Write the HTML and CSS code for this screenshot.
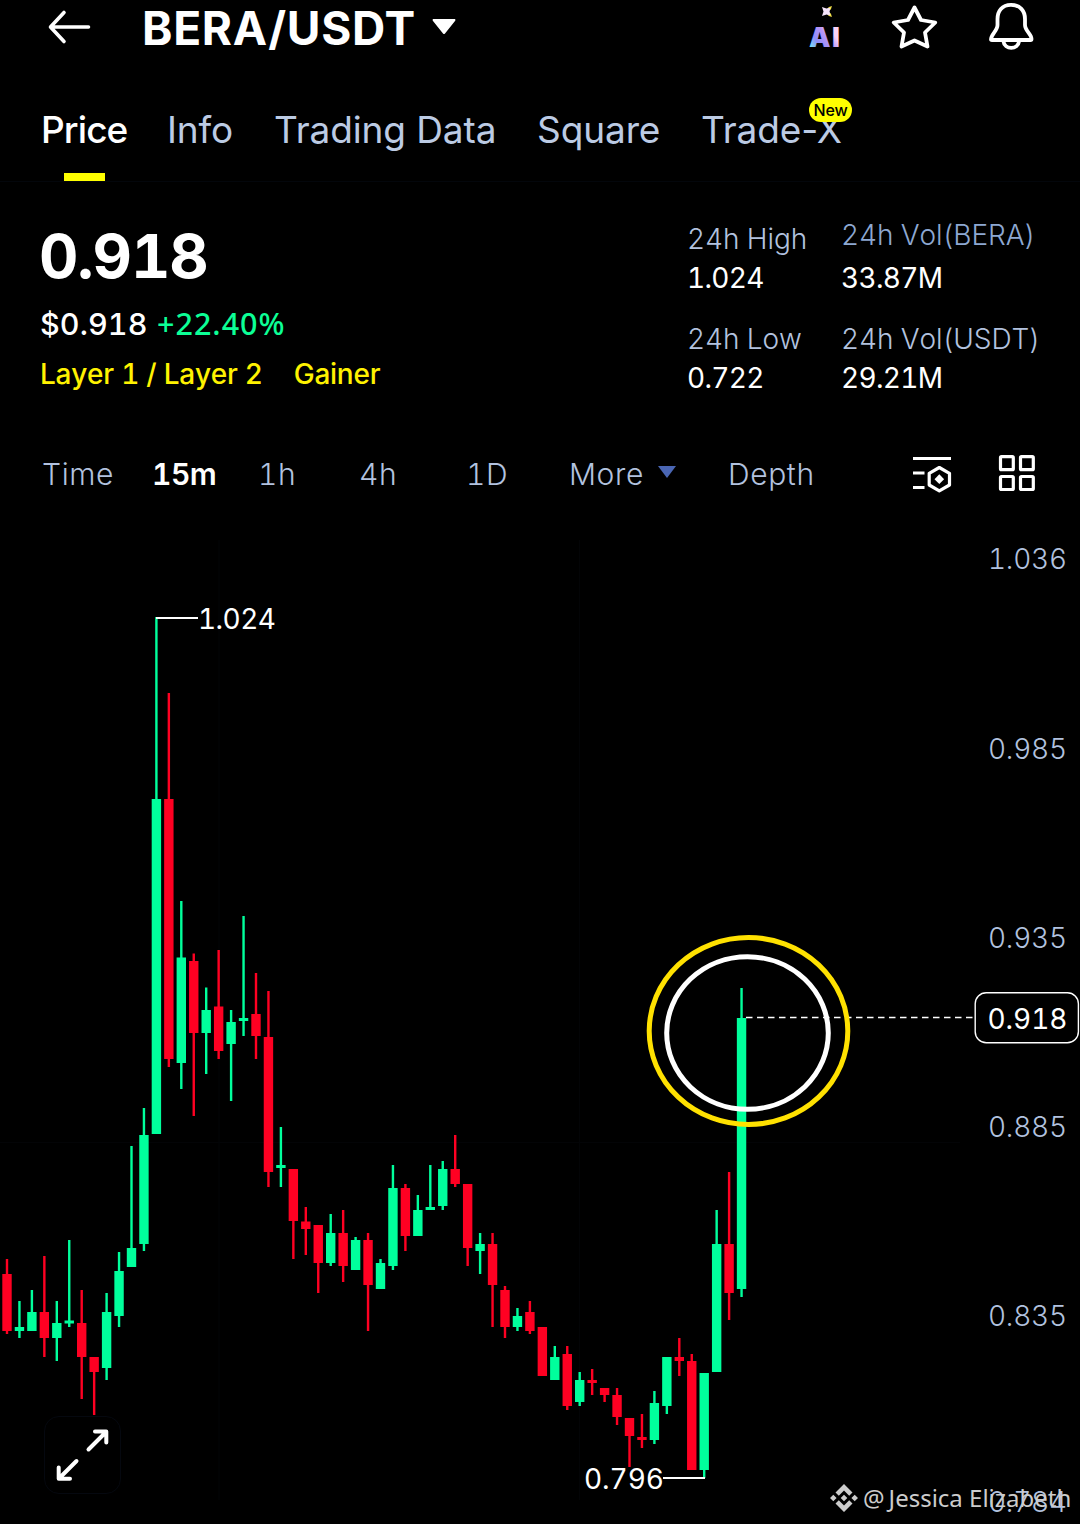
FILE: index.html
```
<!DOCTYPE html>
<html lang="en">
<head>
    <meta charset="UTF-8">
    <meta name="viewport" content="width=device-width, initial-scale=1.0">
    <title>BERA/USDT</title>
    <link rel="stylesheet" href="styles.css">
</head>
<body>
    <header class="header">
        <svg class="back" width="44" height="36" viewBox="0 0 44 36">
            <path d="M16 3.5 L2.5 18 L16 32.5 M3 18 H40.5"/>
        </svg>
        <h1 class="pair">BERA/USDT</h1>
        <svg class="caret" width="24" height="16" viewBox="0 0 24 16">
            <path d="M1 0 H23 Q24 1 23 2 L13 14.5 Q12 15.5 11 14.5 L1 2 Q0 1 1 0Z"/>
        </svg>
        <div class="actions">
            <svg width="40" height="52" viewBox="0 0 40 52">
                <defs>
                    <linearGradient id="aiFill" x1="0" y1="1" x2="1" y2="0.3">
                        <stop offset="0" stop-color="#7df0f4"/>
                        <stop offset="0.15" stop-color="#7fd8f6"/>
                        <stop offset="0.35" stop-color="#8f8dfa"/>
                        <stop offset="0.6" stop-color="#b795f8"/>
                        <stop offset="0.8" stop-color="#fbd3f7"/>
                    </linearGradient>
                </defs>
                <path class="spark" d="M14 7 L18.5 8.5 L23 7 L21.5 11.5 L23 16 L18.5 14.5 L14 16 L15.5 11.5Z"/>
                <path class="spark-edge" d="M20.5 7.8 L23 7 L22.2 9.5 M22.2 13.5 L23 16 L20.5 15.2"/>
                <text class="ai" x="1" y="47">AI</text>
            </svg>
            <svg class="line" width="48" height="52" viewBox="892 0 48 52">
                <path d="M915.5 7.5 L922 20 L936.3 22.5 L926 32.5 L928.5 46.5 L915.5 40.5 L902.5 46.5 L905 32.5 L894.7 22.5 L909 20Z"/>
            </svg>
            <svg class="line bell" width="48" height="52" viewBox="987 0 48 52">
                <path d="M1011 4.8 C1002 4.8 997.5 11 997.5 19 V25 C997.5 31 991 34 991 39.5 Q991 40 992 40 H1030.5 Q1031.5 40 1031.5 39 C1031.5 34 1025 31 1025 25 V19 C1025 11 1020 4.8 1011 4.8Z"/>
                <path d="M1003.5 41.5 C1004.5 50 1018 50 1019 41.5"/>
            </svg>
        </div>
    </header>

    <nav class="tabs">
        <span class="tab active">Price</span>
        <span class="tab">Info</span>
        <span class="tab">Trading Data</span>
        <span class="tab">Square</span>
        <span class="tab">Trade-X<em class="badge">New</em></span>
    </nav>

    <section class="ticker">
        <div class="quote">
            <div class="last">0.918</div>
            <div class="change"><span class="usd">$0.918</span><span class="pct">+22.40%</span></div>
            <div class="tags"><span>Layer 1 / Layer 2</span><span>Gainer</span></div>
        </div>
        <dl class="stats">
            <div><dt>24h High</dt><dd>1.024</dd></div>
            <div class="raised"><dt>24h Vol(BERA)</dt><dd>33.87M</dd></div>
            <div><dt>24h Low</dt><dd>0.722</dd></div>
            <div><dt>24h Vol(USDT)</dt><dd>29.21M</dd></div>
        </dl>
    </section>

    <nav class="intervals">
        <span>Time</span>
        <span class="on">15m</span>
        <span>1h</span>
        <span>4h</span>
        <span>1D</span>
        <span class="more">More<i class="more-caret"></i></span>
        <span>Depth</span>
        <svg class="tool" width="40" height="40" viewBox="912 454 40 40">
            <path d="M913 458.5 H951 M913 473 H924.5 M913 487.5 H924.5"/>
            <path d="M939.3 467.5 L949.5 473.3 V485 L939.3 490.8 L929.2 485 V473.3Z"/>
            <path class="solid" d="M939.3 474.3 L944.1 479.2 L939.3 484.1 L934.5 479.2Z"/>
        </svg>
        <svg class="tool" width="40" height="40" viewBox="998 454 40 40">
            <rect x="1000.5" y="456.7" width="12.8" height="13" rx="1"/>
            <rect x="1020.5" y="456.7" width="12.8" height="13" rx="1"/>
            <rect x="1000.5" y="476.5" width="12.8" height="13" rx="1"/>
            <rect x="1020.5" y="476.5" width="12.8" height="13" rx="1"/>
        </svg>
    </nav>

    <main class="chart">
        <svg id="plot" width="1080" height="1004" viewBox="0 520 1080 1004">
            <path class="grid" d="M0 1142.5 H960 M219 540 V1500 M579.5 540 V1500"/>
            <g id="candles"></g>
            <path class="leader" d="M156 618 H198 M663 1478 H705"/>
            <text class="mark" x="198" y="629" textLength="78">1.024</text>
            <text class="mark" x="584" y="1489" textLength="80">0.796</text>
            <path class="last-line" d="M746 1017.5 H974"/>
            <ellipse class="ring outer" cx="748.5" cy="1031" rx="99.3" ry="93.5"/>
            <ellipse class="ring inner" cx="747.5" cy="1033" rx="80.8" ry="76.3"/>
            <g id="axis"></g>
            <rect class="last-box" x="975.2" y="992.7" width="103.2" height="50" rx="11"/>
            <text class="mark" x="987.5" y="1029" textLength="80">0.918</text>
        </svg>
        <button class="expand">
            <svg width="56" height="56" viewBox="55 1427 56 56">
                <path d="M88.5 1449.5 L106 1432 M95 1431.5 H106.3 V1442.5 M76.5 1461 L59 1478.5 M70 1478.8 H58.7 V1467.5"/>
            </svg>
        </button>
        <div class="watermark">
            <svg width="28" height="28" viewBox="0 0 28 28">
                <path d="M14 0 L22.5 8.5 L19.2 11.8 L14 6.6 L8.8 11.8 L5.5 8.5Z"/>
                <path d="M14 28 L22.5 19.5 L19.2 16.2 L14 21.4 L8.8 16.2 L5.5 19.5Z"/>
                <path d="M3.3 10.7 L6.6 14 L3.3 17.3 L0 14Z M24.7 10.7 L28 14 L24.7 17.3 L21.4 14Z M14 10.7 L17.3 14 L14 17.3 L10.7 14Z"/>
            </svg>
            <span>@</span><span>Jessica Elizabeth</span>
        </div>
    </main>

    <script src="chart.js"></script>
</body>
</html>
```
FILE: styles.css
```
body {
    margin: 0;
    width: 1080px;
    height: 1524px;
    overflow: hidden;
    background: #000;
    color: #fff;
    font-family: Inter, "Noto Sans", sans-serif;
    font-variant-numeric: tabular-nums;
}

svg {
    display: block;
}

/* Header */
.header {
    display: flex;
    height: 60px;
    padding-left: 48px;
}

.back {
    margin-top: 9px;
    fill: none;
    stroke: #fff;
    stroke-width: 3.6;
    stroke-linecap: round;
    stroke-linejoin: round;
}

.pair {
    margin: 0 0 0 50px;
    width: 290px;
    font-size: 46px;
    font-weight: 700;
    line-height: 56px;
    letter-spacing: 0.7px;
}

.caret {
    margin-top: 19px;
    fill: #fff;
}

.actions {
    display: flex;
    margin: 0 45px 0 auto;
    gap: 43px;
}

.bell {
    margin-left: 5px;
}

.ai {
    font-size: 27px;
    font-weight: 900;
    letter-spacing: 1.5px;
    fill: url(#aiFill);
}

.spark {
    fill: #f6e4fb;
}

.spark-edge {
    fill: none;
    stroke: #f5e34c;
    stroke-width: 1.2;
}

.line {
    fill: none;
    stroke: #fff;
    stroke-width: 3.8;
    stroke-linejoin: round;
}

/* Tabs */
.tabs {
    display: grid;
    grid-template-columns: 126px 107px 263px 164px auto;
    box-sizing: border-box;
    height: 122px;
    padding: 45px 0 0 41px;
    border-bottom: 1px solid #03060b;
    font-size: 37px;
    font-variant-numeric: normal;
    line-height: 50px;
    color: #bccbe4;
}

.tab {
    position: relative;
    justify-self: start;
    white-space: nowrap;
    letter-spacing: -0.1px;
}

.tab.active {
    color: #fff;
    font-weight: 500;
    letter-spacing: -0.9px;
}

.tab.active::after {
    content: "";
    position: absolute;
    left: 23px;
    top: 68px;
    width: 41px;
    height: 8px;
    background: #ff0;
}

.badge {
    position: absolute;
    left: 108px;
    top: -7px;
    width: 43px;
    height: 24px;
    border-radius: 12px;
    background: #ff0;
    color: #000;
    font-size: 16px;
    font-style: normal;
    font-weight: 500;
    line-height: 25px;
    text-align: center;
}

/* Ticker */
.ticker {
    display: flex;
    box-sizing: border-box;
    height: 258px;
    padding: 38px 0 0 40px;
    font-kerning: none;
}

.quote {
    width: 647px;
}

.last {
    margin-left: -1px;
    font-size: 61px;
    font-weight: 700;
    line-height: 73px;
    letter-spacing: -1.1px;
}

.change {
    margin-top: 8px;
    font-size: 30.5px;
    font-weight: 500;
    line-height: 44px;
}

.usd {
    display: inline-block;
    width: 117px;
    letter-spacing: 0.1px;
}

.pct {
    color: #0cff96;
    font-family: "Noto Sans", sans-serif;
    letter-spacing: 1px;
}

.tags {
    display: flex;
    gap: 31px;
    margin-top: 7px;
    font-size: 28px;
    font-weight: 500;
    line-height: 42px;
    color: #fff200;
    letter-spacing: -0.25px;
}

.stats {
    display: grid;
    grid-template-columns: 154px auto;
    align-content: start;
    row-gap: 22px;
    margin: 0;
    line-height: 39px;
    white-space: nowrap;
}

.stats dt {
    font-size: 28px;
    font-weight: 300;
    color: #b2c2df;
    letter-spacing: -0.1px;
}

.stats .raised dt {
    margin-top: -4px;
    padding-bottom: 4px;
    color: #8da8d2;
}

.stats dd {
    margin: 0;
    font-size: 28px;
    font-weight: 400;
    letter-spacing: -0.7px;
}

/* Intervals */
.intervals {
    display: grid;
    grid-template-columns: 110px 106px 101px 107px 103px 159px 184px 86px auto;
    box-sizing: border-box;
    height: 80px;
    padding: 9px 0 0 42px;
    font-size: 30px;
    font-weight: 300;
    line-height: 51px;
    letter-spacing: 0.6px;
    color: #b2c2df;
}

.intervals .on {
    color: #fff;
    font-weight: 600;
    letter-spacing: -0.5px;
}

.more {
    display: flex;
}

.more-caret {
    width: 0;
    height: 0;
    margin: 17px 0 0 14px;
    border: 9px solid transparent;
    border-top: 12px solid #4a66b4;
    border-bottom: 0;
}

.tool {
    margin-top: 5px;
    fill: none;
    stroke: #fff;
    stroke-width: 3.2;
    stroke-linejoin: round;
}

.tool .solid {
    fill: #fff;
    stroke: none;
}

/* Chart */
.chart {
    position: relative;
    height: 1004px;
}

.grid {
    fill: none;
    stroke: #030406;
}

.up {
    fill: #00ff9c;
}

.down {
    fill: #ff0022;
}

.leader {
    stroke: #fff;
    stroke-width: 1.8;
}

.mark,
.tick {
    font-size: 28px;
    font-kerning: none;
    fill: #fff;
}

.tick {
    font-weight: 300;
    fill: #b2c2df;
}

.last-line {
    stroke: #fff;
    stroke-width: 1.4;
    stroke-dasharray: 6.5 4.5;
}

.ring {
    fill: none;
    stroke-width: 5;
}

.outer {
    stroke: #ffe100;
}

.inner {
    stroke: #fff;
}

.last-box {
    fill: #000;
    stroke: #fff;
    stroke-width: 1.4;
}

.expand {
    position: absolute;
    left: 44px;
    top: 896px;
    width: 77px;
    height: 78px;
    padding: 0;
    border: 1px solid #05080f;
    border-radius: 15px;
    background: #000;
}

.expand svg {
    margin: 0 auto;
    fill: none;
    stroke: #fff;
    stroke-width: 4;
    stroke-linecap: round;
    stroke-linejoin: round;
}

.watermark {
    position: absolute;
    left: 830px;
    top: 962px;
    display: flex;
    align-items: center;
    font-family: "Noto Sans", sans-serif;
    font-size: 24px;
    line-height: 32px;
    color: #ccc;
    fill: #ccc;
    white-space: nowrap;
}

.watermark svg {
    margin-right: 5px;
}

.watermark span + span {
    margin-left: 4px;
}
```
FILE: chart.js
```
// one candle each: direction, high, body top, body bottom, low
const candles = [
    ["down", 1259, 1274, 1331, 1334],
    ["up", 1301, 1327, 1331, 1338],
    ["up", 1290, 1312, 1331, 1331],
    ["down", 1256, 1312, 1338, 1357],
    ["up", 1301, 1323, 1338, 1361],
    ["up", 1240, 1320.5, 1323.5, 1327],
    ["down", 1290, 1323, 1357, 1399],
    ["down", 1357, 1357, 1372, 1415],
    ["up", 1293, 1312, 1368, 1380],
    ["up", 1252, 1271, 1316, 1327],
    ["up", 1146, 1248, 1267, 1267],
    ["up", 1108, 1135, 1244, 1251],
    ["up", 617, 799, 1134, 1134],
    ["down", 693, 799, 1059, 1067],
    ["up", 901, 957.5, 1063, 1089],
    ["down", 953.5, 961, 1033, 1116],
    ["up", 987.5, 1010, 1033, 1074],
    ["down", 950, 1006.5, 1051, 1059],
    ["up", 1010, 1022, 1044, 1101],
    ["up", 916, 1018, 1021, 1036],
    ["down", 973, 1014, 1036, 1059],
    ["down", 991, 1037, 1172, 1187],
    ["up", 1127, 1165, 1168, 1187],
    ["down", 1169, 1169, 1221, 1259],
    ["down", 1207, 1221.5, 1229, 1255],
    ["down", 1225, 1225, 1263, 1293],
    ["up", 1214, 1233, 1263, 1266],
    ["down", 1210, 1233, 1266, 1282],
    ["up", 1237, 1240, 1270, 1270],
    ["down", 1233, 1240, 1285, 1331],
    ["up", 1259, 1263, 1289, 1289],
    ["up", 1165, 1188, 1266, 1270],
    ["down", 1184, 1188, 1236, 1251],
    ["up", 1195, 1210, 1236, 1236],
    ["up", 1165, 1207, 1210, 1210],
    ["up", 1161, 1169, 1206, 1210],
    ["down", 1135, 1169, 1184, 1187],
    ["down", 1184, 1184, 1248, 1266],
    ["up", 1233, 1244, 1251, 1274],
    ["down", 1233, 1244, 1285, 1327],
    ["down", 1286, 1290, 1327, 1338],
    ["up", 1308, 1316, 1327, 1331],
    ["down", 1301, 1312, 1331, 1334],
    ["down", 1327, 1327, 1376, 1376],
    ["up", 1346, 1357, 1380, 1380],
    ["down", 1346, 1354, 1406, 1410],
    ["up", 1372, 1380, 1402, 1406],
    ["down", 1369, 1380, 1383, 1395],
    ["down", 1388, 1388, 1395, 1402],
    ["down", 1388, 1395, 1417, 1425],
    ["down", 1418, 1418, 1436, 1467],
    ["down", 1414, 1437, 1440, 1448],
    ["up", 1391, 1403, 1440, 1444],
    ["up", 1357, 1357, 1406, 1414],
    ["down", 1338, 1357, 1361, 1376],
    ["down", 1354, 1361, 1470, 1470],
    ["up", 1373, 1373, 1470, 1478],
    ["up", 1210, 1244, 1372, 1372],
    ["down", 1172, 1244, 1293, 1320],
    ["up", 988, 1018, 1289, 1297]
];

const ticks = [
    ["1.036", 569],
    ["0.985", 759],
    ["0.935", 948],
    ["0.885", 1137],
    ["0.835", 1326],
    ["0.784", 1512]
];

const step = 12.45;
const firstX = 7;

function add(parent, tag, attrs) {
    const el = document.createElementNS("http://www.w3.org/2000/svg", tag);
    for (const key in attrs) {
        el.setAttribute(key, attrs[key]);
    }
    parent.appendChild(el);
    return el;
}

const group = document.getElementById("candles");
candles.forEach(([dir, high, top, bottom, low], i) => {
    const x = firstX + i * step;
    add(group, "rect", { class: dir, x: x - 1.2, y: high, width: 2.4, height: low - high });
    add(group, "rect", { class: dir, x: x - 4.7, y: top, width: 9.4, height: bottom - top });
});

const axis = document.getElementById("axis");
ticks.forEach(([label, y]) => {
    add(axis, "text", { class: "tick", x: 988, y: y, textLength: 79 }).textContent = label;
});
```
